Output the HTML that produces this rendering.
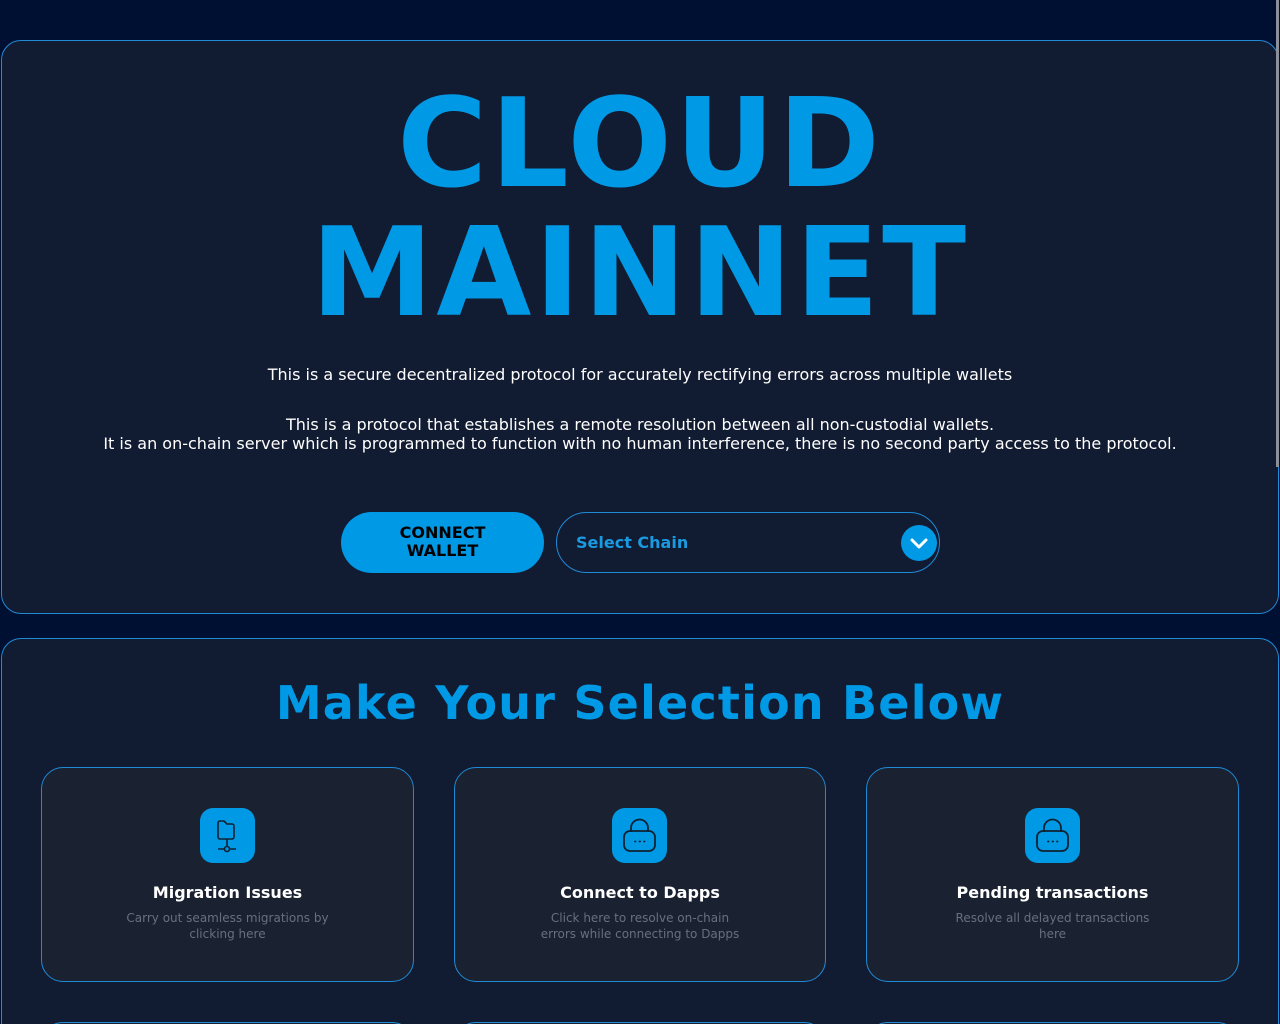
<!DOCTYPE html>
<html><head><meta charset="utf-8"><style>
*{box-sizing:border-box;margin:0;padding:0}
html,body{width:1280px;height:1024px;overflow:hidden;background:#001033;font-family:"DejaVu Sans","Liberation Sans",sans-serif}
#w{position:relative;width:1280px;height:1024px;overflow:hidden}
.panel{position:absolute;left:1px;width:1278px;background:#111b31;border:1px solid #1f8ad6;border-radius:20px}
.p1{top:40px;height:574px}
.p2{top:638px;height:386px;border-bottom:none;border-radius:20px 20px 0 0}
h1{position:absolute;left:0;width:100%;text-align:center;color:#0099e6;font-weight:bold;font-size:123px;line-height:130px;letter-spacing:3px}
.t{position:absolute;left:0;width:100%;text-align:center;color:#fff;font-size:16px;line-height:19px}
.btn{position:absolute;left:341px;top:512px;width:203px;height:61px;border-radius:31px;background:#0099e6;color:#000;font-weight:bold;font-size:16px;line-height:18px;text-align:center;padding-top:12px}
.sel{position:absolute;left:556px;top:512px;width:384px;height:61px;border-radius:31px;border:1px solid #1f8ad6}
.sel span{position:absolute;left:19px;top:20px;color:#1a9ae0;font-weight:bold;font-size:16px}
.sel i{position:absolute;right:2px;top:12px;width:36px;height:36px;border-radius:50%;background:#0099e6}
h2{position:absolute;left:0;width:100%;top:676px;text-align:center;color:#0099e6;font-weight:bold;font-size:46px;letter-spacing:1.2px}
.card{position:absolute;top:767px;height:215px;border:1px solid #1f8ad6;border-radius:22px;background:#1a2130;text-align:center}
.ic{position:absolute;left:50%;margin-left:-28px;top:40px;width:55px;height:55px;border-radius:13px;background:#0099e6}
.card b{position:absolute;left:0;width:100%;top:115px;color:#fff;font-size:16px}
.card p{position:absolute;left:50%;transform:translateX(-50%);width:215px;top:142px;color:#687080;font-size:12px;line-height:16px}
.r2{top:1022px;height:60px}
.sb{position:absolute;right:1px;top:0;width:3px;height:467px;background:#8a8f99}
</style></head><body><div id="w">
<div class="panel p1"></div>
<h1 style="top:80px">CLOUD</h1>
<h1 style="top:209px">MAINNET</h1>
<div class="t" style="top:365px">This is a secure decentralized protocol for accurately rectifying errors across multiple wallets</div>
<div class="t" style="top:415px">This is a protocol that establishes a remote resolution between all non-custodial wallets.<br>It is an on-chain server which is programmed to function with no human interference, there is no second party access to the protocol.</div>
<div class="btn">CONNECT<br>WALLET</div>
<div class="sel"><span>Select Chain</span><i><svg width="36" height="36" viewBox="0 0 36 36"><path d="M11 15l7 7 7-7" fill="none" stroke="#fff" stroke-width="3" stroke-linecap="round" stroke-linejoin="round"/></svg></i></div>
<div class="panel p2"></div>
<h2>Make Your Selection Below</h2>
<div class="card" style="left:41px;width:373px"><div class="ic"><svg width="55" height="55" viewBox="0 0 55 55" fill="none" stroke="#123" stroke-width="1.6" stroke-linejoin="round"><path d="M18 15a2 2 0 0 1 2-2h4l3 3h5a2 2 0 0 1 2 2v11a2 2 0 0 1-2 2h-12a2 2 0 0 1-2-2z"/><path d="M27 31v7.5M18 41h6.5M29.5 41h6.5"/><circle cx="27" cy="41" r="2.5"/></svg></div><b>Migration Issues</b><p>Carry out seamless migrations by clicking here</p></div>
<div class="card" style="left:454px;width:372px"><div class="ic"><svg width="55" height="55" viewBox="0 0 55 55" fill="none" stroke="#123" stroke-width="1.8"><path d="M19 24v-4a8.5 8.5 0 0 1 17 0v4"/><rect x="12" y="23" width="31" height="20" rx="6"/><path d="M23 33.5h.5M27.5 33.5h.5M32 33.5h.5" stroke-linecap="round"/></svg></div><b>Connect to Dapps</b><p style="width:205px">Click here to resolve on-chain errors while connecting to Dapps</p></div>
<div class="card" style="left:866px;width:373px"><div class="ic"><svg width="55" height="55" viewBox="0 0 55 55" fill="none" stroke="#123" stroke-width="1.8"><path d="M19 24v-4a8.5 8.5 0 0 1 17 0v4"/><rect x="12" y="23" width="31" height="20" rx="6"/><path d="M23 33.5h.5M27.5 33.5h.5M32 33.5h.5" stroke-linecap="round"/></svg></div><b>Pending transactions</b><p>Resolve all delayed transactions here</p></div>
<div class="card r2" style="left:41px;width:373px"></div>
<div class="card r2" style="left:454px;width:372px"></div>
<div class="card r2" style="left:866px;width:373px"></div>
<div class="sb"></div>
</div></body></html>
